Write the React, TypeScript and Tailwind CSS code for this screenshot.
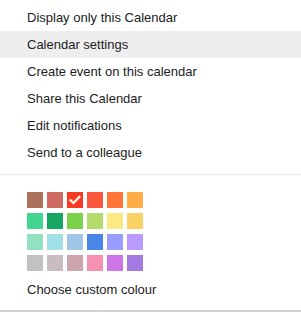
const items = [
  "Display only this Calendar",
  "Calendar settings",
  "Create event on this calendar",
  "Share this Calendar",
  "Edit notifications",
  "Send to a colleague",
];

// classic calendar palette, row by row
const colours = [
  "#ac725e", "#d06b64", "#f83a22", "#fa573c", "#ff7537", "#ffad46",
  "#42d692", "#16a765", "#7bd148", "#b3dc6c", "#fbe983", "#fad165",
  "#92e1c0", "#9fe1e7", "#9fc6e7", "#4986e7", "#9a9cff", "#b99aff",
  "#c2c2c2", "#cabdbf", "#cca6ac", "#f691b2", "#cd74e6", "#a47ae2",
];

const selected = 2;
const hovered = 1;

export default function App() {
  return (
    <div className="w-[301px] h-[312px] bg-white flex flex-col font-['Liberation_Sans',Arial,sans-serif] text-[13px] text-[#222]">
      <ul className="pt-1">
        {items.map((label, i) => (
          <li
            key={label}
            className={
              "h-[27px] leading-[27px] px-[27px] cursor-pointer whitespace-nowrap " +
              (i === hovered ? "bg-[#eeeeee]" : "")
            }
          >
            {label}
          </li>
        ))}
      </ul>
      <div className="mt-2 h-px bg-[#ebebeb]" />
      <div className="pt-[17px] px-[27px]">
        <div className="grid grid-cols-[repeat(6,16px)] gap-x-1 gap-y-[5px]">
          {colours.map((c, i) => (
            <div
              key={c}
              className="w-4 h-4 flex items-center justify-center"
              style={{ backgroundColor: c }}
            >
              {i === selected && (
                <svg width="12" height="10" viewBox="0 0 12 10" fill="none">
                  <path
                    d="M1.5 5.2 L4.5 8 L10.5 1.8"
                    stroke="white"
                    strokeWidth="2.2"
                    strokeLinecap="square"
                  />
                </svg>
              )}
            </div>
          ))}
        </div>
      </div>
      <div className="mt-[5px] h-[27px] leading-[27px] px-[27px] cursor-pointer">
        Choose custom colour
      </div>
      <div className="mt-auto h-[2px] bg-[#d0d0d0]" />
    </div>
  );
}
